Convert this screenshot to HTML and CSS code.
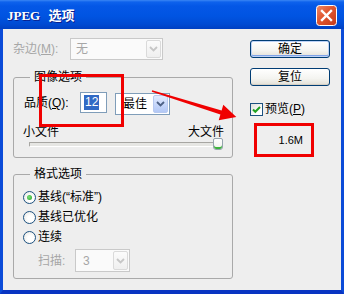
FILE: index.html
```html
<!DOCTYPE html>
<html lang="zh-CN">
<head>
<meta charset="utf-8">
<title>JPEG 选项</title>
<link rel="stylesheet" href="styles.css">
</head>
<body>
<div class="window">
  <div class="titlebar">
    <span class="title"><span class="latin">JPEG</span> 选项</span>
    <span class="close">
      <svg width="21" height="21" viewBox="0 0 21 21">
        <defs>
          <linearGradient id="cg" x1="0" y1="0" x2="1" y2="1">
            <stop offset="0" stop-color="#F08A68"/>
            <stop offset="0.45" stop-color="#E0562F"/>
            <stop offset="1" stop-color="#C43A1A"/>
          </linearGradient>
        </defs>
        <rect x="0.5" y="0.5" width="20" height="20" rx="3" fill="url(#cg)" stroke="#FFFFFF"/>
        <path d="M6 6 L15 15 M15 6 L6 15" stroke="#FFFFFF" stroke-width="2.4" stroke-linecap="square"/>
      </svg>
    </span>
  </div>
  <div class="client">
    <div class="left">
      <div class="matte-row">
        <span class="label disabled matte-label">杂边(<u>M</u>):</span>
        <div class="select disabled matte">
          <span class="val">无</span>
          <span class="drop"><svg width="9" height="6" viewBox="0 0 9 6"><path d="M1 1 L4.5 4.5 L8 1" fill="none" stroke="currentColor" stroke-width="1.8"/></svg></span>
        </div>
      </div>
      <div class="group g1">
        <div class="legend">图像选项</div>
        <div class="quality-row">
          <span class="label q-label">品质(<u>Q</u>):</span>
          <div class="input"><span class="sel">12</span></div>
          <div class="select quality">
            <span class="val">最佳</span>
            <span class="drop"><svg width="9" height="6" viewBox="0 0 9 6"><path d="M1 1 L4.5 4.5 L8 1" fill="none" stroke="currentColor" stroke-width="1.8"/></svg></span>
          </div>
        </div>
        <div class="size-labels"><span>小文件</span><span>大文件</span></div>
        <div class="slider">
          <div class="track"></div>
          <div class="thumb"></div>
        </div>
      </div>
      <div class="group g2">
        <div class="legend">格式选项</div>
        <div class="radios">
          <div class="radio-row"><span class="radio checked"></span><span>基线(“标准”)</span></div>
          <div class="radio-row"><span class="radio"></span><span>基线已优化</span></div>
          <div class="radio-row"><span class="radio"></span><span>连续</span></div>
        </div>
        <div class="scan-row">
          <span class="label disabled scan-label">扫描:</span>
          <div class="select disabled scan">
            <span class="val">3</span>
            <span class="drop"><svg width="9" height="6" viewBox="0 0 9 6"><path d="M1 1 L4.5 4.5 L8 1" fill="none" stroke="currentColor" stroke-width="1.8"/></svg></span>
          </div>
        </div>
      </div>
    </div>
    <div class="right">
      <div class="btn default">确定</div>
      <div class="btn">复位</div>
      <div class="check-row">
        <span class="checkbox"><svg width="11" height="11" viewBox="0 0 11 11"><path d="M2 5.5 L4.3 7.8 L9 3" fill="none" stroke="#21A121" stroke-width="2"/></svg></span>
        <span>预览(<u>P</u>)</span>
      </div>
      <div class="size-box">1.6M</div>
    </div>
  </div>
  <svg class="annot" width="344" height="294" viewBox="0 0 344 294">
    <rect x="40.5" y="75.5" width="82" height="50" fill="none" stroke="#F00000" stroke-width="3"/>
    <polygon points="152.2,90.2 221.6,110.6 223.3,104.8 236.3,117.1 218.7,120.2 220.4,114.4 151.8,91.8" fill="#F00000"/>
  </svg>
</div>
</body>
</html>
```

FILE: styles.css
```css
* { box-sizing: border-box; }
html, body { margin: 0; padding: 0; }
body {
  width: 344px;
  height: 294px;
  overflow: hidden;
  font-family: "Liberation Sans", "Noto Sans CJK SC", sans-serif;
  font-size: 12px;
  line-height: 14px;
  color: #000;
  background: #EEEEEE;
}
u { text-decoration: underline; text-underline-offset: 1px; }

.window {
  position: relative;
  width: 344px;
  height: 294px;
  display: flex;
  flex-direction: column;
}

.titlebar {
  height: 29px;
  flex: none;
  display: flex;
  align-items: center;
  justify-content: space-between;
  padding: 0 7px;
  background: linear-gradient(to bottom, #3A86F4 0px, #0E62EC 2px, #0457E6 6px, #0054E2 16px, #004BD3 24px, #0040C2 29px);
}
.title {
  font-family: "Liberation Serif", "Noto Sans CJK SC", serif;
  font-weight: bold;
  font-size: 13px;
  line-height: 16px;
  color: #FFFFFF;
  text-shadow: 1px 1px 0 #0A1E8C;
  word-spacing: 5px;
  padding-top: 2px;
}
.close { display: flex; margin-top: 1px; }

.client {
  flex: 1;
  display: flex;
  gap: 17px;
  padding: 9px 0 0 10px;
  background: #EEEEEE;
  border-left: 3px solid #0B4BD8;
  border-right: 3px solid #0B4BD8;
  border-bottom: 4px solid #0834C2;
}

.left { width: 220px; display: flex; flex-direction: column; }
.right { width: 80px; display: flex; flex-direction: column; }

.label { white-space: nowrap; }
.disabled { color: #A6A6A6; }

.matte-row { height: 22px; display: flex; align-items: center; }
.matte-label { width: 57px; }

.select {
  display: flex;
  align-items: stretch;
  border: 1px solid #7F9DB9;
  background: #FFFFFF;
  padding: 1px;
}
.select .val { flex: 1; display: flex; align-items: center; padding-left: 4px; }
.select .drop {
  width: 15px;
  display: flex;
  align-items: center;
  justify-content: center;
  border: 1px solid #B7C9F0;
  border-radius: 2px;
  background: linear-gradient(to bottom, #E3EBFD, #C4D5FA 60%, #B3C8F5);
  color: #4D6185;
}
.select.disabled { border-color: #C9C9C9; background: #FAFAFA; }
.select.disabled .drop {
  border-color: #DADADA;
  background: linear-gradient(to bottom, #FBFBFB, #EFEFEF);
  color: #C6C6C6;
}
.matte { width: 93px; height: 22px; }

.group {
  border: 1px solid #A9A9A9;
  border-radius: 3px;
  display: flex;
  flex-direction: column;
}
.legend {
  margin-top: -8px;
  margin-left: 16px;
  padding: 0 4px;
  width: fit-content;
  line-height: 14px;
  background: #EEEEEE;
}

.g1 { margin-top: 17px; padding-bottom: 7px; }
.quality-row {
  margin-top: 8px;
  height: 22px;
  display: flex;
  align-items: center;
  padding-left: 10px;
}
.q-label { width: 56px; }
.input {
  width: 27px;
  height: 21px;
  border: 1px solid #7F9DB9;
  background: #FFFFFF;
  padding: 2px 0 0 3px;
  margin-right: 8px;
  align-self: flex-start;
}
.input .sel {
  display: inline-block;
  background: #316AC5;
  color: #FFFFFF;
  line-height: 15px;
  padding: 0 1px;
}
.quality { width: 55px; height: 22px; margin-top: 1px; }
.quality .val { padding-left: 6px; }

.size-labels {
  margin-top: 11px;
  display: flex;
  justify-content: space-between;
  padding: 0 8px 0 9px;
  line-height: 14px;
}
.slider {
  position: relative;
  height: 12px;
  margin-top: -1px;
}
.track {
  position: absolute;
  left: 15px;
  right: 12px;
  top: 4px;
  height: 5px;
  border: 1px solid #A7A6A2;
  border-right-color: #FFFFFF;
  border-bottom-color: #FFFFFF;
  background: #E6E6E3;
  border-radius: 1px;
}
.thumb {
  position: absolute;
  left: 199px;
  top: 0;
  width: 10px;
  height: 12px;
  border: 1px solid #95A3AE;
  border-radius: 2px 2px 3px 3px;
  background: linear-gradient(to bottom, #FFFFFF, #F0F0EC);
  box-shadow: inset 0 -2px 0 #3DB43D;
}

.g2 { margin-top: 16px; padding-bottom: 6px; }
.radios { margin-top: 6px; padding-left: 9px; display: flex; flex-direction: column; }
.radio-row { height: 20px; display: flex; align-items: center; gap: 2px; }
.radio {
  width: 13px;
  height: 13px;
  border-radius: 50%;
  border: 1px solid #1C5180;
  background: radial-gradient(circle at 60% 60%, #FFFFFF 30%, #E4E4DE 100%);
  display: flex;
  align-items: center;
  justify-content: center;
}
.radio.checked::after {
  content: "";
  width: 5px;
  height: 5px;
  border-radius: 50%;
  background: radial-gradient(circle at 40% 40%, #7BE07A, #21A121);
}
.scan-row {
  margin-top: 2px;
  height: 23px;
  display: flex;
  align-items: center;
  padding-left: 24px;
}
.scan-label { width: 37px; }
.scan { width: 55px; height: 23px; }
.scan .val { padding-left: 6px; }

.btn {
  height: 18px;
  border: 1px solid #003C74;
  border-radius: 3px;
  background: linear-gradient(to bottom, #FFFFFF, #F4F4F0 60%, #E2DFD6);
  display: flex;
  align-items: center;
  justify-content: center;
  box-shadow: inset 0 -1px 0 #D6D0C5;
}
.btn.default {
  margin-top: 2px;
  box-shadow: inset 0 0 0 1px #BCD2F6, inset 0 -1px 0 1px #7EA2E8;
}
.btn + .btn { margin-top: 10px; }

.check-row {
  margin-top: 16px;
  height: 14px;
  display: flex;
  align-items: center;
  gap: 2px;
}
.checkbox {
  width: 13px;
  height: 13px;
  border: 1px solid #1C5180;
  background: linear-gradient(135deg, #E0E0DA, #FFFFFF 70%);
  display: flex;
  align-items: center;
  justify-content: center;
}
.size-box {
  margin-top: 7px;
  margin-left: 4px;
  width: 60px;
  height: 34px;
  border: 3px solid #F00000;
  display: flex;
  align-items: center;
  justify-content: flex-end;
  padding-right: 8px;
  font-size: 11px;
}

.annot {
  position: absolute;
  left: 0;
  top: 0;
  pointer-events: none;
}
```
